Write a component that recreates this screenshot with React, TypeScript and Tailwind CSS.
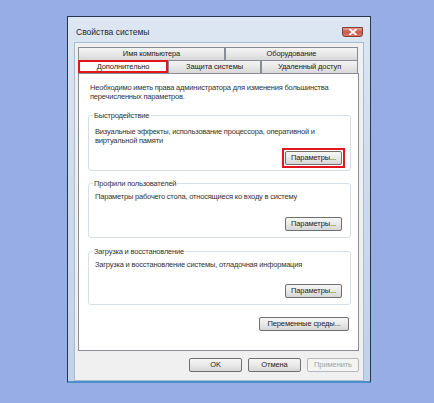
const font = { fontFamily: '"Liberation Sans", Arial, sans-serif' };

function Btn({ label, w, disabled }: { label: string; w: number; disabled?: boolean }) {
  return (
    <div
      className={
        'flex h-[14px] shrink-0 items-center justify-center whitespace-nowrap rounded-[2px] border text-[7.5px] leading-none tracking-[-0.1px] ' +
        (disabled
          ? 'border-[#b5b9bd] bg-[#f4f4f4] text-[#a3a3a3]'
          : 'border-[#707070] bg-gradient-to-b from-[#f6f6f6] via-[#e9e9e9] to-[#d6d6d6] text-[#1e1e1e]')
      }
      style={{ width: w }}
    >
      {label}
    </div>
  );
}

function Group({
  title,
  lines,
  textTop,
  btnTop,
  bottom,
  hl,
}: {
  title: string;
  lines: string[];
  textTop: number;
  btnTop: number;
  bottom: number;
  hl?: boolean;
}) {
  return (
    <div className="flex flex-col rounded-[3px] border border-[#d5dfe5] pr-[8px]" style={{ paddingBottom: bottom }}>
      <div className="-mt-[5px] ml-[4px] w-fit bg-white px-[1px] text-[7.5px] leading-[9px] tracking-[-0.2px] text-[#333]">
        {title}
      </div>
      <div
        className="whitespace-nowrap pl-[6px] text-[7.5px] leading-[9px] tracking-[-0.2px] text-[#333]"
        style={{ marginTop: textTop }}
      >
        {lines.map((l) => (
          <div key={l}>{l}</div>
        ))}
      </div>
      <div className="flex justify-end" style={{ marginTop: btnTop }}>
        {hl ? (
          <div className="-my-[3px] -mr-[3px] border-2 border-[#e3151d] p-[1px]">
            <Btn label="Параметры..." w={57} />
          </div>
        ) : (
          <Btn label="Параметры..." w={57} />
        )}
      </div>
    </div>
  );
}

function Tab({ label, w, sel }: { label: string; w: number; sel?: boolean }) {
  return (
    <div
      className={
        'flex h-[13px] items-center justify-center whitespace-nowrap text-[7.5px] leading-none tracking-[-0.1px] text-[#222] ' +
        (sel
          ? 'border-2 border-[#e3151d] bg-white'
          : 'border border-b-0 border-[#898c95] bg-gradient-to-b from-[#f4f4f4] via-[#e8e8e8] to-[#d8d8d8]')
      }
      style={{ width: w }}
    >
      {label}
    </div>
  );
}

export default function App() {
  return (
    <div className="h-[403px] w-[434px] overflow-hidden bg-[#97ade6] pl-[67px] pt-[16px]" style={font}>
      <div className="flex h-[367px] w-[304px] flex-col border border-b-2 border-[#26354b] border-b-[#4d8fc8] bg-gradient-to-b from-[#dde7f3] via-[#ccdaec] to-[#c0d2e9] px-[6px]">
        <div className="flex h-[25px] shrink-0 items-start justify-between">
          <div className="mt-[11px] pl-[2px] text-[8.5px] leading-none text-[#1b2533]">Свойства системы</div>
          <div className="mr-[1px] mt-[10px] flex h-[10px] w-[21px] items-center justify-center rounded-b-[3px] border border-[#8b3a3a] bg-gradient-to-b from-[#e9a293] via-[#c9574a] to-[#d5786a]">
            <svg width="8" height="6" viewBox="0 0 8 6">
              <path d="M1 0.5 L7 5.5 M7 0.5 L1 5.5" stroke="#fff" strokeWidth="1.8" strokeLinecap="round" />
            </svg>
          </div>
        </div>
        <div className="flex flex-1 flex-col border border-[#a9bcd6] bg-[#f0f0f0] pl-[3px] pr-[4px] pt-[4px]">
          <div className="flex">
            <Tab label="Имя компьютера" w={147} />
            <Tab label="Оборудование" w={133} />
          </div>
          <div className="flex">
            <Tab label="Дополнительно" w={90} sel />
            <Tab label="Защита системы" w={93} />
            <Tab label="Удаленный доступ" w={97} />
          </div>
          <div className="flex h-[278px] w-[281px] flex-col border border-[#898c95] bg-white pl-[9px] pr-[7px]">
            <div className="mt-[9px] whitespace-nowrap pl-[2px] text-[7.5px] leading-[9px] tracking-[-0.2px] text-[#333]">
              <div>Необходимо иметь права администратора для изменения большинства</div>
              <div>перечисленных параметров.</div>
            </div>
            <div className="mt-[14px]">
              <Group
                title="Быстродействие"
                lines={['Визуальные эффекты, использование процессора, оперативной и', 'виртуальной памяти']}
                textTop={7}
                btnTop={6}
                bottom={5}
                hl
              />
            </div>
            <div className="mt-[12px]">
              <Group
                title="Профили пользователей"
                lines={['Параметры рабочего стола, относящиеся ко входу в систему']}
                textTop={4}
                btnTop={16}
                bottom={6}
              />
            </div>
            <div className="mt-[13px]">
              <Group
                title="Загрузка и восстановление"
                lines={['Загрузка и восстановление системы, отладочная информация']}
                textTop={4}
                btnTop={15}
                bottom={6}
              />
            </div>
            <div className="mt-[12px] flex justify-end pr-[2px]">
              <Btn label="Переменные среды..." w={90} />
            </div>
          </div>
          <div className="mt-[7px] flex justify-end gap-[6px]">
            <Btn label="OK" w={53} />
            <Btn label="Отмена" w={53} />
            <Btn label="Применить" w={52} disabled />
          </div>
        </div>
      </div>
    </div>
  );
}
